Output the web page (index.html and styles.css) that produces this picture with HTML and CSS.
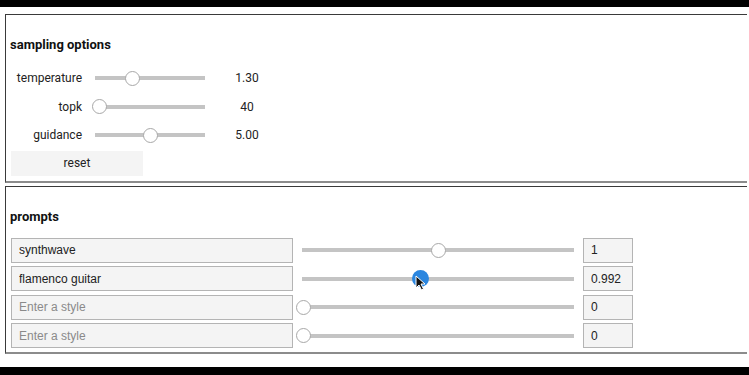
FILE: index.html
```html
<!DOCTYPE html>
<html lang="en">
<head>
  <meta charset="UTF-8">
  <title>sampling options</title>
  <link rel="stylesheet" href="styles.css">
</head>
<body>
  <div class="topbar"></div>

  <section class="panel">
    <h3>sampling options</h3>
    <div class="opts">
      <label class="opt-label" for="temperature">temperature</label>
      <input class="slider small" type="range" id="temperature" min="0" max="4" step="0.01" value="1.3">
      <span class="opt-value">1.30</span>

      <label class="opt-label" for="topk">topk</label>
      <input class="slider small" type="range" id="topk" min="40" max="200" step="1" value="40">
      <span class="opt-value">40</span>

      <label class="opt-label" for="guidance">guidance</label>
      <input class="slider small" type="range" id="guidance" min="0" max="10" step="0.01" value="5">
      <span class="opt-value">5.00</span>
    </div>
    <button class="reset-btn">reset</button>
  </section>

  <section class="panel">
    <h3>prompts</h3>
    <div class="prompts">
      <div class="prompt-row">
        <input class="prompt-text" type="text" value="synthwave" placeholder="Enter a style">
        <input class="slider wide" type="range" min="0" max="2" step="0.001" value="1">
        <input class="prompt-weight" type="text" value="1">
      </div>
      <div class="prompt-row">
        <input class="prompt-text" type="text" value="flamenco guitar" placeholder="Enter a style">
        <div class="slider-wrap">
          <input class="slider wide active" type="range" min="0" max="2" step="0.001" value="0.866">
          <!-- mouse pointer caught mid-drag -->
          <svg class="cursor" width="11" height="16" viewBox="0 0 11 16">
            <path d="M1 1 L1 13 L4 10 L6.5 15 L8.5 14 L6 9 L10 9 Z" fill="#111" stroke="#fff" stroke-width="1"/>
          </svg>
        </div>
        <input class="prompt-weight" type="text" value="0.992">
      </div>
      <div class="prompt-row">
        <input class="prompt-text" type="text" placeholder="Enter a style">
        <input class="slider wide" type="range" min="0" max="2" step="0.001" value="0">
        <input class="prompt-weight" type="text" value="0">
      </div>
      <div class="prompt-row">
        <input class="prompt-text" type="text" placeholder="Enter a style">
        <input class="slider wide" type="range" min="0" max="2" step="0.001" value="0">
        <input class="prompt-weight" type="text" value="0">
      </div>
    </div>
  </section>

  <div class="bottombar"></div>
</body>
</html>
```

FILE: styles.css
```css
html, body {
  overflow: hidden;
}
body {
  margin: 0;
  background: #fff;
  color: #222;
  font-family: Roboto, "Liberation Sans", sans-serif;
  font-size: 12px;
}
.topbar {
  height: 7px;
  background: #000;
}
.bottombar {
  height: 9px;
  margin-top: 13px;
  background: #000;
}
.panel {
  margin: 7px 2px 0 5px;
  padding: 22px 0 5px 5px;
  border: 1px solid #3a3a3a;
  border-right: none;
  border-bottom: 2px solid #8c8c8c;
}
.panel + .panel {
  margin-top: 3px;
  padding-bottom: 4px;
}
.panel h3 {
  margin: 0 0 11px -1px;
  font-size: 13px;
  line-height: 16px;
  font-weight: 700;
  color: #111;
}
.panel + .panel h3 {
  margin-bottom: 13px;
}

/* sampling options */
.opts {
  display: grid;
  grid-template-columns: 71px 116px 82px;
  grid-auto-rows: 28.5px;
  column-gap: 10px;
  align-items: center;
}
.opt-label {
  text-align: right;
  color: #222;
}
.opt-value {
  text-align: center;
  margin-left: -24px;
}
.reset-btn {
  display: block;
  margin-top: 1px;
  width: 132px;
  height: 25px;
  border: none;
  background: #f4f4f4;
  font-family: inherit;
  font-size: 12px;
  color: #222;
  cursor: pointer;
}

/* sliders */
.slider {
  -webkit-appearance: none;
  appearance: none;
  margin: 0;
  height: 16px;
  background: linear-gradient(#c4c4c4, #c4c4c4) no-repeat center / calc(100% - 6px) 4px;
  outline: none;
}
.slider.small {
  width: 116px;
}
.slider.wide {
  width: 284px;
  background-size: calc(100% - 12px) 4px;
}
.slider::-webkit-slider-thumb {
  -webkit-appearance: none;
  appearance: none;
  width: 15px;
  height: 15px;
  border-radius: 50%;
  background: #fff;
  border: 1px solid #a8a8a8;
  box-sizing: border-box;
}
.slider.active::-webkit-slider-thumb {
  width: 17px;
  height: 17px;
  background: #2b86df;
  border: none;
}

/* prompts */
.prompts {
  display: flex;
  flex-direction: column;
  gap: 3.6px;
}
.prompt-row {
  display: flex;
  align-items: center;
  height: 25px;
}
.prompt-text,
.prompt-weight {
  box-sizing: border-box;
  height: 25px;
  margin: 0;
  padding: 0 7px;
  border: 1px solid #b4b4b4;
  background: #f4f4f4;
  font-family: "Liberation Sans", Arial, sans-serif;
  font-size: 12px;
  color: #222;
  outline: none;
}
.prompt-text {
  width: 282px;
  margin-right: 3px;
}
.prompt-text::placeholder {
  color: #8a8a8a;
}
.prompt-weight {
  width: 50px;
  margin-left: 3px;
}
.slider-wrap {
  position: relative;
  display: flex;
}
.cursor {
  position: absolute;
  left: 119px;
  top: 4px;
  pointer-events: none;
}
```
